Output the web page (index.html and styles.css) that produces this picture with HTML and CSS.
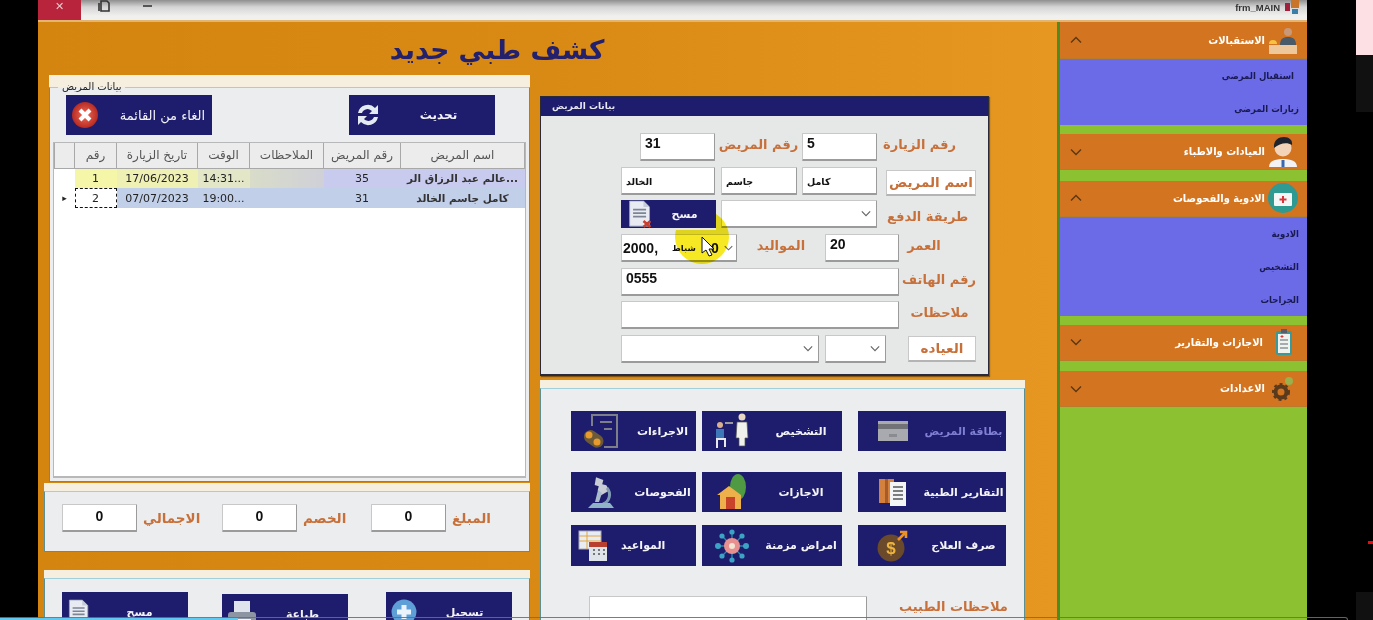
FILE: index.html
```html
<!DOCTYPE html>
<html lang="ar">
<head>
    <meta charset="UTF-8">
    <meta name="viewport" content="width=device-width, initial-scale=1.0">
    <title>frm_MAIN</title>
    <link rel="stylesheet" href="styles.css">
</head>
<body>
    <svg class="defs" width="0" height="0">
        <symbol id="doc" viewBox="0 0 30 32">
            <path d="M3 1h16l7 7v22H3z" fill="#e8ecf2" stroke="#9aa3b5"/>
            <path d="M19 1v7h7" fill="#c5cbd8"/>
            <path d="M7 11h15M7 15h15M7 19h15" stroke="#7d8595" stroke-width="2"/>
            <path d="M19 24l8 7M27 24l-8 7" stroke="#c8402f" stroke-width="3"/>
        </symbol>
        <symbol id="chev" viewBox="0 0 12 8">
            <path d="M1 1.5l5 5 5-5" fill="none" stroke="currentColor" stroke-width="1.4"/>
        </symbol>
    </svg>

    <div class="window">
        <div class="titlebar">
            <div class="close">&#10005;</div>
            <svg class="tb-icon tb-copy" width="12" height="12" viewBox="0 0 12 12"><path d="M3 1h6l2 2v8H3zM1 3v8" fill="none" stroke="#333" stroke-width="1.6"/></svg>
            <div class="tb-min"></div>
            <div class="tb-name">frm_MAIN</div>
            <svg class="tb-logo" width="15" height="14" viewBox="0 0 15 14"><rect x="0" y="3" width="5" height="8" fill="#a3203c"/><rect x="6" y="0" width="8" height="8" fill="#c8742a"/><rect x="7" y="9" width="6" height="5" fill="#3a7fa8"/></svg>
        </div>

        <div class="content">
            <div class="main">
                <h1 class="page-title">كشف طبي جديد</h1>
                <div class="columns">
                    <div class="left-col">
                        <div class="group group-list">
                            <fieldset class="group-in list-in">
                                <legend>بيانات المريض</legend>
                                <div class="list-actions">
                                    <div class="btn btn-list btn-cancel">
                                        <svg width="28" height="28" viewBox="0 0 28 28"><defs><radialGradient id="red"><stop offset="0" stop-color="#f0705a"/><stop offset="1" stop-color="#b82a22"/></radialGradient></defs><circle cx="14" cy="14" r="13" fill="url(#red)"/><path d="M9 9l10 10M19 9L9 19" stroke="#fff" stroke-width="4"/></svg>
                                        <span>الغاء من القائمة</span>
                                    </div>
                                    <div class="btn btn-list">
                                        <svg width="28" height="28" viewBox="0 0 28 28"><path d="M4 12a10 10 0 0 1 17-5l3-3v9h-9l3-3a6 6 0 0 0-10 2zM24 16a10 10 0 0 1-17 5l-3 3v-9h9l-3 3a6 6 0 0 0 10-2z" fill="#e4eaf2"/></svg>
                                        <span>تحديث</span>
                                    </div>
                                </div>
                                <div class="grid-wrap">
                                    <table class="grid">
                                        <colgroup>
                                            <col class="c-head"><col class="c-num"><col class="c-date"><col class="c-time"><col class="c-note"><col class="c-id"><col>
                                        </colgroup>
                                        <thead>
                                            <tr><th></th><th>رقم</th><th>تاريخ الزيارة</th><th>الوقت</th><th>الملاحظات</th><th>رقم المريض</th><th>اسم المريض</th></tr>
                                        </thead>
                                        <tbody>
                                            <tr class="row-a"><td class="rh"></td><td class="y1">1</td><td class="y2">17/06/2023</td><td class="y3">14:31...</td><td class="y4"></td><td>35</td><td class="name">عالم عبد الرزاق الر...</td></tr>
                                            <tr class="row-b"><td class="rh">&#9656;</td><td class="cur">2</td><td>07/07/2023</td><td>19:00...</td><td></td><td>31</td><td class="name">كامل جاسم الخالد</td></tr>
                                        </tbody>
                                    </table>
                                </div>
                            </fieldset>
                        </div>

                        <div class="group group-totals">
                            <div class="group-in totals">
                                <div class="field total">0</div><div class="lbl l-total">الاجمالي</div>
                                <div class="field total">0</div><div class="lbl l-disc">الخصم</div>
                                <div class="field total">0</div><div class="lbl l-amount">المبلغ</div>
                            </div>
                        </div>

                        <div class="group group-save">
                            <div class="group-in save-row">
                                <div class="btn btn-save">
                                    <svg width="24" height="28" viewBox="0 0 30 32"><use href="#doc"/></svg>
                                    <span>مسح</span>
                                </div>
                                <div class="btn btn-save low">
                                    <svg width="30" height="28" viewBox="0 0 30 28"><rect x="7" y="1" width="16" height="12" fill="#dfe4ec"/><rect x="1" y="12" width="28" height="12" rx="3" fill="#8d95a3"/><rect x="6" y="19" width="18" height="8" fill="#f2f4f7"/></svg>
                                    <span>طباعة</span>
                                </div>
                                <div class="btn btn-save last">
                                    <svg width="26" height="26" viewBox="0 0 26 26"><circle cx="13" cy="13" r="12.5" fill="#5f9fd8"/><path d="M13 6v14M6 13h14" stroke="#eaf3fb" stroke-width="5"/></svg>
                                    <span>تسجيل</span>
                                </div>
                            </div>
                        </div>
                    </div>

                    <div class="right-col">
                        <div class="patient">
                            <div class="patient-bar">بيانات المريض</div>
                            <div class="patient-body">
                                <div class="frow">
                                    <div class="field w75 push19">31</div>
                                    <div class="lbl w87">رقم المريض</div>
                                    <div class="field w75">5</div>
                                    <div class="lbl w68 push6">رقم الزيارة</div>
                                </div>
                                <div class="frow">
                                    <div class="field small w94">الخالد</div>
                                    <div class="field small w76 push6">جاسم</div>
                                    <div class="field small w75 push5">كامل</div>
                                    <div class="lbl lbl-box lower w90 push9">اسم المريض</div>
                                </div>
                                <div class="frow">
                                    <div class="btn btn-clear">
                                        <svg width="26" height="28" viewBox="0 0 30 32"><use href="#doc"/></svg>
                                        <span>مسح</span>
                                    </div>
                                    <div class="field select w156 push5"><svg width="10" height="7"><use href="#chev"/></svg></div>
                                    <div class="lbl lower w78 push10">طريقة الدفع</div>
                                </div>
                                <div class="frow">
                                    <div class="field select date w116"><b>2000,</b><span class="month">شباط</span><b class="day">0</b><svg width="9" height="6"><use href="#chev"/></svg></div>
                                    <div class="lbl w88">المواليد</div>
                                    <div class="field w74">20</div>
                                    <div class="lbl w50">العمر</div>
                                </div>
                                <div class="frow">
                                    <div class="field w278">0555</div>
                                    <div class="lbl w77 align-end">رقم الهاتف</div>
                                </div>
                                <div class="frow">
                                    <div class="field w278"></div>
                                    <div class="lbl w77 push2">ملاحظات</div>
                                </div>
                                <div class="frow">
                                    <div class="field select w198"><svg width="10" height="7"><use href="#chev"/></svg></div>
                                    <div class="field select w61 push6"><svg width="10" height="7"><use href="#chev"/></svg></div>
                                    <div class="lbl lbl-box w68 push22">العياده</div>
                                </div>
                            </div>
                        </div>

                        <div class="group group-actions">
                            <div class="group-in actions-in">
                                <div class="actions">
                                    <div class="btn btn-act">
                                        <svg width="38" height="38" viewBox="0 0 38 38"><path d="M10 14V3h25v32H22" fill="none" stroke="#7d7f88" stroke-width="2"/><path d="M18 10h12M22 17h8" stroke="#7d7f88" stroke-width="2"/><rect x="1" y="20" width="21" height="13" rx="6.5" transform="rotate(35 11 27)" fill="#6a5a3a"/><circle cx="7" cy="23" r="3.5" fill="#e89a2c"/><circle cx="15" cy="30" r="3.5" fill="#e89a2c"/></svg>
                                        <span>الاجراءات</span>
                                    </div>
                                    <div class="btn btn-act">
                                        <svg width="38" height="38" viewBox="0 0 38 38"><circle cx="29" cy="5" r="3.5" fill="#e8d8c0"/><path d="M24 10h10l1 16h-3v8h-6v-8h-3z" fill="#f0f0ec" stroke="#555" stroke-width=".7"/><circle cx="7" cy="13" r="3" fill="#d8b090"/><path d="M3 17h8v10H3z" fill="#3f78b8"/><path d="M3 27h9v8M4 27v9" fill="none" stroke="#e8e8e8" stroke-width="2"/><path d="M12 11h8" stroke="#9a9a9a" stroke-width="2"/></svg>
                                        <span>التشخيص</span>
                                    </div>
                                    <div class="btn btn-act off">
                                        <svg width="30" height="20" viewBox="0 0 30 20"><rect width="30" height="20" fill="#a8aab0"/><rect y="3" width="30" height="5" fill="#707278"/><rect x="11" y="13" width="8" height="3" fill="#8a8c92"/></svg>
                                        <span>بطاقة المريض</span>
                                    </div>

                                    <div class="btn btn-act">
                                        <svg width="32" height="36" viewBox="0 0 32 36"><path d="M16 2l5 6-3 3 3 3v6H11v-6l3-3-3-3z" transform="rotate(-30 16 12)" fill="#c8ccd4"/><path d="M22 14a10 10 0 0 1-4 16" fill="none" stroke="#7f9cb4" stroke-width="3"/><path d="M13 16l4 3-3 9h-4z" fill="#a9bccb"/><path d="M3 34l5-5h17l4 5z" fill="#8fb4c8"/></svg>
                                        <span>الفحوصات</span>
                                    </div>
                                    <div class="btn btn-act">
                                        <svg width="30" height="36" viewBox="0 0 30 36"><ellipse cx="21" cy="13" rx="8" ry="13" fill="#4f9a42"/><rect x="20" y="22" width="2" height="8" fill="#5a4a28"/><path d="M0 21l12-9 12 9v14H3V21z" fill="#edb04a"/><rect x="9" y="23" width="9" height="12" fill="#c8432a"/></svg>
                                        <span>الاجازات</span>
                                    </div>
                                    <div class="btn btn-act">
                                        <svg width="28" height="28" viewBox="0 0 28 28"><rect x="0" y="1" width="15" height="24" fill="#d4813d"/><rect x="6" y="1" width="3" height="24" fill="#a85a28"/><rect x="11" y="4" width="16" height="24" fill="#f3f4f5"/><path d="M14 9h10M14 13h10M14 17h10M14 21h10" stroke="#555" stroke-width="1.3"/></svg>
                                        <span>التقارير الطبية</span>
                                    </div>

                                    <div class="btn btn-act tight">
                                        <svg width="30" height="32" viewBox="0 0 30 32"><rect x="1" y="1" width="22" height="18" fill="#e8edf4" stroke="#aab"/><path d="M1 6h22M1 11h22M9 1v18" stroke="#e2a53c"/><rect x="11" y="12" width="18" height="19" fill="#dfe3ea"/><rect x="11" y="12" width="18" height="5" fill="#b83e30"/><path d="M15 20h2M20 20h2M25 20h2M15 24h2M20 24h2M25 24h2" stroke="#777" stroke-width="2"/></svg>
                                        <span>المواعيد</span>
                                    </div>
                                    <div class="btn btn-act">
                                        <svg width="34" height="34" viewBox="0 0 34 34"><path d="M17 3v28M3 17h28M7 7l20 20M27 7L7 27" stroke="#2a88a8" stroke-width="1.4"/><circle cx="17" cy="17" r="8" fill="#e89090"/><circle cx="17" cy="17" r="3" fill="#f4e4d4"/><g fill="#3ba4c4"><circle cx="17" cy="3" r="2.6"/><circle cx="17" cy="31" r="2.6"/><circle cx="3" cy="17" r="3"/><circle cx="31" cy="17" r="3"/><circle cx="7" cy="7" r="2.6"/><circle cx="27" cy="7" r="2.6"/><circle cx="7" cy="27" r="2.6"/><circle cx="27" cy="27" r="2.6"/></g></svg>
                                        <span>امراض مزمنة</span>
                                    </div>
                                    <div class="btn btn-act">
                                        <svg width="32" height="32" viewBox="0 0 32 32"><circle cx="14" cy="18" r="13.5" fill="#6a4a2a"/><text x="14" y="24" text-anchor="middle" class="coin">$</text><path d="M21 10l8-8M23 2h6v6" fill="none" stroke="#e8912c" stroke-width="2.6"/></svg>
                                        <span>صرف العلاج</span>
                                    </div>
                                </div>
                                <div class="doctor-notes">
                                    <div class="field notes"></div>
                                    <div class="lbl">ملاحظات الطبيب</div>
                                </div>
                            </div>
                        </div>
                    </div>
                </div>
            </div>

            <div class="side">
                <div class="side-head">
                    <svg class="chev" width="12" height="8" viewBox="0 0 12 8"><path d="M1 6.5l5-5 5 5" fill="none" stroke="currentColor" stroke-width="1.4"/></svg>
                    <span>الاستقبالات</span>
                    <svg width="30" height="30" viewBox="0 0 30 30"><circle cx="20" cy="7" r="4" fill="#c89878"/><path d="M12 20c0-6 3-8 8-8s8 2 8 8z" fill="#4a5a68"/><path d="M1 20h28v9H1z" fill="#eec79a"/><path d="M1 19a4 4 0 0 1 8 0z" fill="#f5c242"/></svg>
                </div>
                <div class="side-sub">
                    <div class="side-item first">استقبال المرضى</div>
                    <div class="side-item">زيارات المرضى</div>
                </div>

                <div class="side-head">
                    <svg class="chev" width="12" height="8" viewBox="0 0 12 8"><path d="M1 1.5l5 5 5-5" fill="none" stroke="currentColor" stroke-width="1.4"/></svg>
                    <span>العيادات والاطباء</span>
                    <svg width="30" height="32" viewBox="0 0 30 32"><path d="M1 31c0-6 6-8 14-8s14 2 14 8z" fill="#f2f2f4"/><path d="M15 24v7" stroke="#3a68b0" stroke-width="3"/><circle cx="15" cy="12" r="8.5" fill="#f4d4b8"/><path d="M6 12c-1-8 5-11 10-11s9 3 8 8c-5-3-12-2-18 3z" fill="#20242c"/></svg>
                </div>
                <div class="side-gap"></div>

                <div class="side-head">
                    <svg class="chev" width="12" height="8" viewBox="0 0 12 8"><path d="M1 6.5l5-5 5 5" fill="none" stroke="currentColor" stroke-width="1.4"/></svg>
                    <span>الادوية والفحوصات</span>
                    <svg width="30" height="30" viewBox="0 0 30 30"><circle cx="15" cy="15" r="15" fill="#2f9a92"/><rect x="6" y="10" width="18" height="13" rx="1" fill="#f4f6f6"/><path d="M15 13v7M11.5 16.5h7" stroke="#d8343c" stroke-width="2"/></svg>
                </div>
                <div class="side-sub">
                    <div class="side-item">الادوية</div>
                    <div class="side-item">التشخيص</div>
                    <div class="side-item">الجراحات</div>
                </div>

                <div class="side-head">
                    <svg class="chev" width="12" height="8" viewBox="0 0 12 8"><path d="M1 1.5l5 5 5-5" fill="none" stroke="currentColor" stroke-width="1.4"/></svg>
                    <span>الاجازات والتقارير</span>
                    <svg class="clip" width="18" height="28" viewBox="0 0 18 28"><rect x="1" y="3" width="16" height="24" rx="2" fill="#3a9a98"/><rect x="3" y="6" width="12" height="19" fill="#f0f2ee"/><rect x="6" y="1" width="6" height="4" fill="#55606a"/><path d="M5 12h8M5 16h8M5 20h8" stroke="#5a6670"/><path d="M7 7v3M5.5 8.5h3" stroke="#d83c3c"/></svg>
                </div>
                <div class="side-gap"></div>

                <div class="side-head">
                    <svg class="chev" width="12" height="8" viewBox="0 0 12 8"><path d="M1 1.5l5 5 5-5" fill="none" stroke="currentColor" stroke-width="1.4"/></svg>
                    <span>الاعدادات</span>
                    <svg class="gear" width="26" height="26" viewBox="0 0 26 26"><circle cx="19" cy="5" r="4" fill="#9ab04a"/><circle cx="11" cy="16" r="5.5" fill="none" stroke="#5a3a1c" stroke-width="4"/><circle cx="11" cy="16" r="8" fill="none" stroke="#5a3a1c" stroke-width="2" stroke-dasharray="3 3"/></svg>
                </div>
            </div>
        </div>
    </div>

    <div class="rail">
        <div class="rail-pink"></div>
        <div class="rail-dark"></div>
        <div class="rail-red"></div>
        <div class="rail-foot"></div>
    </div>

    <!-- mouse highlight and player bar from the recording -->
    <div class="highlight"></div>
    <svg class="cursor" width="13" height="21" viewBox="0 0 13 21"><path d="M1 1v16l4-3 3 6 3-1-3-6h5z" fill="#fff" stroke="#111"/></svg>
    <div class="player-line"><div class="player-done"></div></div>
</body>
</html>
```

FILE: styles.css
```css
* {
    margin: 0;
    padding: 0;
    box-sizing: border-box;
}

html, body {
    height: 100%;
}

body {
    background: #000;
    font-family: 'DejaVu Sans', 'Noto Sans', sans-serif;
    display: flex;
    overflow: hidden;
    height: 620px;
    position: relative;
}

.defs {
    position: absolute;
}

.window {
    width: 1269px;
    height: 620px;
    margin-left: 38px;
    display: flex;
    flex-direction: column;
    flex-shrink: 0;
    overflow: hidden;
    filter: blur(0.45px);
}

/* title bar */
.titlebar {
    height: 22px;
    flex-shrink: 0;
    display: flex;
    align-items: flex-start;
    background: linear-gradient(180deg, #8f8f8f 0%, #d5d5d5 35%, #f0f0ee 80%, #f0f0ee 100%);
    border-bottom: 2px solid #e2b574;
    color: #222;
}

.close {
    width: 43px;
    height: 20px;
    background: #b8243c;
    color: #e8c8cc;
    font-size: 11px;
    text-align: center;
    line-height: 14px;
}

.tb-copy {
    margin: 0 0 0 17px;
}

.tb-min {
    width: 9px;
    height: 2px;
    background: #555;
    margin: 5px 0 0 33px;
}

.tb-name {
    margin-left: auto;
    font-size: 9.5px;
    font-weight: bold;
    color: #333;
    margin-top: 2px;
    font-family: 'Liberation Sans', sans-serif;
}

.tb-logo {
    margin: 0 7px 0 5px;
}

.content {
    flex: 1;
    display: flex;
    min-height: 0;
}

/* main area */
.main {
    width: 1019px;
    background: linear-gradient(90deg, #d38510 0%, #d88a14 50%, #e69722 100%);
    padding: 0 0 0 6px;
}

.page-title {
    height: 53px;
    width: 906px;
    text-align: center;
    font-size: 26.5px;
    line-height: 55px;
    color: #23206e;
    font-weight: bold;
}

.columns {
    display: flex;
    gap: 10px;
}

.left-col {
    width: 486px;
}

.right-col {
    width: 485px;
    padding-top: 21px;
}

/* panels */
.group {
    background: #f6efe0;
    padding-top: 8px;
}

.group-in {
    background: #ebedee;
    border: 1px solid #5d8f92;
    border-top-color: #9fd0dc;
}

.group-list {
    margin-left: 5px;
    height: 407px;
}

.list-in {
    height: 399px;
    padding: 0 3px 2px 3px;
    min-width: 0;
}

legend {
    margin-left: 5px;
    padding: 0 4px;
    font-size: 10px;
    line-height: 8px;
    color: #222;
}

.list-actions {
    display: flex;
    justify-content: space-between;
    padding: 4px 31px 0 13px;
    margin-bottom: 7px;
}

.btn {
    background: #1e1c6c;
    color: #f4f4f8;
    display: flex;
    align-items: center;
    font-weight: bold;
    font-size: 11px;
    flex-shrink: 0;
    overflow: hidden;
}

.btn span {
    flex: 1;
    text-align: center;
    white-space: nowrap;
}

.btn svg {
    flex-shrink: 0;
}

.btn-list {
    width: 146px;
    height: 40px;
    padding-left: 5px;
    font-size: 12px;
}

.btn-cancel {
    font-size: 13px;
    font-weight: normal;
}

.btn-cancel span {
    padding-left: 14px;
}

.grid-wrap {
    height: 336px;
    background: #fff;
    border: 1px solid #b8b8b8;
    border-bottom-width: 2px;
}

.grid {
    width: 100%;
    border-collapse: collapse;
    table-layout: fixed;
    font-size: 11px;
    color: #222;
}

.c-head { width: 20px; }
.c-num { width: 42px; }
.c-date { width: 81px; }
.c-time { width: 52px; }
.c-note { width: 74px; }
.c-id { width: 77px; }

.grid th {
    height: 25px;
    background: #ececec;
    border: 1px solid #a8a8a8;
    border-top: 0;
    font-weight: normal;
    font-size: 12px;
    color: #555;
}

.grid td {
    height: 20px;
    text-align: center;
    white-space: nowrap;
    overflow: hidden;
}

.row-a td {
    background: #c9cbee;
}

.row-b td {
    background: #c2cfe9;
}

.grid td.rh {
    background: #fff;
    font-size: 9px;
    color: #222;
}

.grid td.y1 { background: #f6f6a8; }
.grid td.y2 { background: #eef0b4; }
.grid td.y3 { background: #e3e7c8; }
.grid td.y4 { background: linear-gradient(90deg, #d8dcc8, #cfd0d8); }

.grid td.cur {
    background: #fff;
    outline: 1px dashed #111;
    outline-offset: -1px;
}

.grid td.name {
    font-size: 10.5px;
    font-weight: bold;
    color: #333;
}

.group-totals {
    margin-top: 1px;
    height: 69px;
}

.totals {
    height: 61px;
    display: flex;
    align-items: center;
    padding: 0 0 8px 17px;
}

.field {
    background: #fff;
    border: 1px solid #c8c8c8;
    border-right-color: #9b9b9b;
    border-bottom: 2px solid #9b9b9b;
    border-radius: 1px;
    font-family: 'Liberation Sans', sans-serif;
    font-weight: bold;
    font-size: 14px;
    color: #111;
    height: 28px;
    padding: 1px 4px;
    flex-shrink: 0;
    overflow: hidden;
}

.field.small {
    font-family: 'DejaVu Sans', sans-serif;
    font-size: 9.5px;
    padding-top: 8px;
}

.total {
    width: 75px;
    text-align: center;
    line-height: 20px;
}

.lbl {
    color: #c8703a;
    font-weight: bold;
    font-size: 13px;
    text-align: center;
    white-space: nowrap;
    flex-shrink: 0;
}

.frow .lbl {
    margin-bottom: 5px;
}

.frow .lbl.lbl-box {
    margin-bottom: 0;
}

.frow .lbl.lower {
    margin: 5px 0 0 10px;
}

.frow .lbl-box.lower {
    margin: 4px 0 0 9px;
}

.totals .lbl {
    font-size: 13.5px;
    text-align: left;
    padding-left: 6px;
}

.l-total { width: 85px; }
.l-disc { width: 74px; }
.l-amount { width: 52px; }

.group-save {
    margin-top: 18px;
    height: 60px;
}

.save-row {
    height: 52px;
    display: flex;
    gap: 34px;
    padding: 13px 0 0 17px;
}

.btn-save {
    width: 126px;
    height: 40px;
    padding-left: 5px;
    align-self: flex-start;
}

.btn-save.low {
    margin-top: 2px;
}

.btn-save.last {
    margin-left: 4px;
}

/* patient form */
.patient {
    width: 449px;
    height: 280px;
    background: #e6e8e8;
    border: 1px solid #2a2a3a;
    border-bottom-width: 2px;
    box-shadow: 1px 1px 1px rgba(0, 0, 0, 0.4);
}

.patient-bar {
    height: 19px;
    background: #1e1c6c;
    color: #e8e8f0;
    font-size: 9px;
    font-weight: bold;
    padding-left: 11px;
    line-height: 18px;
}

.patient-body {
    padding: 17px 0 0 80px;
    display: grid;
    grid-auto-rows: 28px;
    row-gap: 5.7px;
}

.frow {
    display: flex;
    align-items: center;
}

.w50 { width: 50px; }
.w61 { width: 61px; }
.w68 { width: 68px; }
.w74 { width: 74px; }
.w75 { width: 75px; }
.w76 { width: 76px; }
.w77 { width: 77px; }
.w78 { width: 78px; }
.w87 { width: 87px; }
.w88 { width: 88px; }
.w90 { width: 90px; }
.w94 { width: 94px; }
.w116 { width: 116px; }
.w156 { width: 156px; }
.w198 { width: 198px; }
.w278 { width: 278px; }

.push2 { margin-left: 2px; }
.push5 { margin-left: 5px; }
.push6 { margin-left: 6px; }
.push9 { margin-left: 9px; }
.push10 { margin-left: 10px; }
.push19 { margin-left: 19px; }
.push22 { margin-left: 22px; }

.align-end {
    text-align: right;
}

.lbl-box {
    background: #fff;
    border: 1px solid #c8c8c8;
    border-bottom: 2px solid #b4b4b4;
    height: 26px;
    line-height: 23px;
    font-size: 13.5px;
}

.select {
    display: flex;
    align-items: center;
    justify-content: flex-end;
    color: #666;
    padding-right: 5px;
}

.btn-clear {
    width: 95px;
    height: 28px;
    padding-left: 6px;
    overflow: visible;
}

.date {
    justify-content: flex-start;
    padding-left: 1px;
    padding-right: 3px;
    color: #111;
}

.month {
    font-family: 'DejaVu Sans', sans-serif;
    font-size: 8.5px;
    margin-left: 14px;
}

.day {
    margin-left: 15px;
}

.date svg {
    margin-left: auto;
    color: #666;
}

/* action buttons */
.group-actions {
    margin-top: 4px;
    height: 240px;
}

.actions-in {
    height: 240px;
    border-bottom: 0;
    padding: 22px 0 0 30px;
}

.actions {
    display: grid;
    grid-template-columns: 125px 140px 158px;
    grid-template-rows: 40px 40px 41px;
    column-gap: 6px;
    row-gap: 21px;
}

.actions .btn:nth-child(3n) {
    margin-left: 10px;
    width: 148px;
}

.actions .btn:nth-child(n+7) {
    margin-top: -8px;
    height: 41px;
}

.btn-act {
    padding-left: 10px;
}

.btn-act svg {
    width: 40px;
    margin-right: 8px;
}

.actions .btn:nth-child(3n) svg {
    margin-left: 5px;
}

.btn-act.tight svg {
    margin-left: -8px;
}

.btn-act.tight span {
    padding-right: 40px;
}

.btn-act.off {
    color: #7f7fd4;
}

.coin {
    font-family: 'Liberation Sans', sans-serif;
    font-size: 17px;
    font-weight: bold;
    fill: #efb43c;
}

.doctor-notes {
    display: flex;
    align-items: flex-start;
    padding: 22px 0 0 18px;
    gap: 32px;
}

.notes {
    width: 278px;
    height: 30px;
}

.doctor-notes .lbl {
    margin-top: 3px;
}

/* accordion on the right */
.side {
    width: 250px;
    background: #8cc232;
    border-left: 3px solid #4f8a22;
    font-family: 'DejaVu Sans Condensed', 'DejaVu Sans', sans-serif;
    font-stretch: condensed;
}

.side-head {
    height: 36px;
    background: #d27420;
    border-bottom: 1px solid #b97a2a;
    display: flex;
    align-items: center;
    justify-content: flex-end;
    color: #fff;
    font-size: 11px;
    font-weight: bold;
    padding-right: 9px;
}

.side-head:first-child {
    height: 37px;
}

.side-head span {
    margin-right: 3px;
}

.side-head svg {
    flex-shrink: 0;
}

.side-head .chev {
    color: #5c3714;
    margin-right: auto;
    margin-left: 10px;
}

.side-head .clip {
    margin: 0 5px 0 9px;
}

.side-head .gear {
    margin: 0 2px;
}

.side-sub {
    background: #6b6be8;
    margin-bottom: 9px;
}

.side-item {
    height: 33px;
    line-height: 33px;
    text-align: right;
    padding-right: 8px;
    color: #1a1a52;
    font-size: 9.5px;
    font-weight: bold;
}

.side-item.first {
    padding-right: 13px;
}

.side-gap {
    height: 10.5px;
}

/* rest of the recording's screen */
.rail {
    width: 17px;
    margin-left: 49px;
    display: flex;
    flex-direction: column;
    flex-shrink: 0;
}

.rail-pink {
    height: 55px;
    background: #fde0e4;
}

.rail-dark {
    height: 57px;
    background: #111;
}

.rail-red {
    width: 5px;
    height: 3px;
    background: #e80c10;
    margin: 429px 0 0 12px;
}

.rail-foot {
    height: 28px;
    margin-top: 48px;
    background: #111;
}

/* notch keeps the navy clear button out of the highlight */
.highlight {
    position: absolute;
    left: 675px;
    top: 210px;
    width: 54px;
    height: 54px;
    border-radius: 50%;
    background: #f5e60a;
    opacity: 0.9;
    mix-blend-mode: multiply;
    clip-path: polygon(41px 0, 100% 0, 100% 100%, 0 100%, 0 20px, 41px 20px);
}

.cursor {
    position: absolute;
    left: 701px;
    top: 236px;
}

.player-line {
    position: absolute;
    left: 0;
    bottom: 0;
    width: 1348px;
    height: 3px;
    border-top: 1px solid rgba(110, 110, 110, 0.9);
    border-right: 1px solid rgba(110, 110, 110, 0.9);
    border-top-right-radius: 3px;
}

.player-done {
    width: 238px;
    height: 2px;
    background: #62c8ee;
}
```
